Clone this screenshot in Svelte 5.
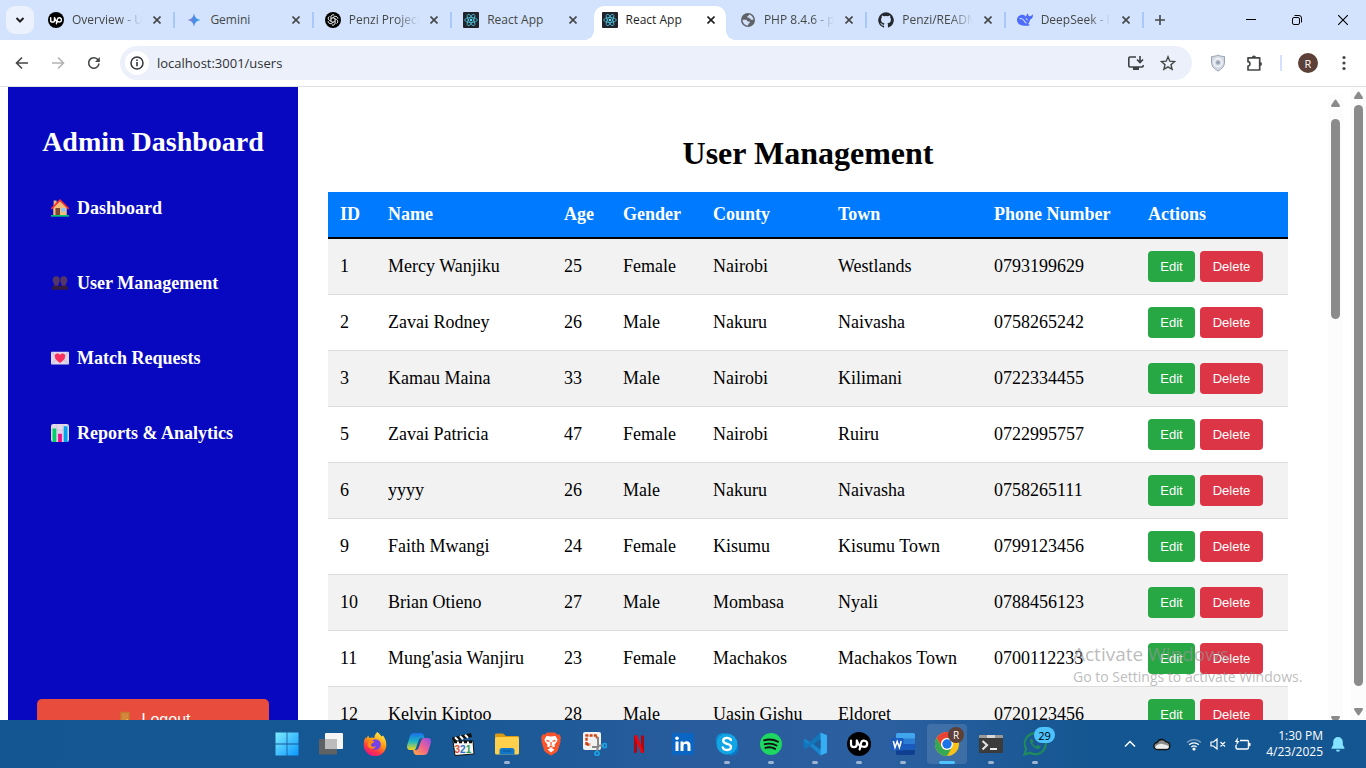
<script>
  const tabs = [
    { title: 'Overview - U', icon: 'upwork', sep: true, fade: true },
    { title: 'Gemini', icon: 'gemini', sep: true },
    { title: 'Penzi Project', icon: 'openai', sep: true, fade: true },
    { title: 'React App', icon: 'react' },
    { title: 'React App', icon: 'react', active: true },
    { title: 'PHP 8.4.6 - p', icon: 'globe', sep: true, fade: true },
    { title: 'Penzi/READM', icon: 'github', sep: true, fade: true },
    { title: 'DeepSeek - I', icon: 'deepseek', sep: true, fade: true }
  ];

  const links = [
    { label: 'Dashboard', icon: 'house' },
    { label: 'User Management', icon: 'people' },
    { label: 'Match Requests', icon: 'letter' },
    { label: 'Reports & Analytics', icon: 'chart' }
  ];

  const columns = [
    ['ID', 48], ['Name', 176], ['Age', 59], ['Gender', 90],
    ['County', 125], ['Town', 156], ['Phone Number', 154], ['Actions', 152]
  ];

  const users = [
    [1, 'Mercy Wanjiku', 25, 'Female', 'Nairobi', 'Westlands', '0793199629'],
    [2, 'Zavai Rodney', 26, 'Male', 'Nakuru', 'Naivasha', '0758265242'],
    [3, 'Kamau Maina', 33, 'Male', 'Nairobi', 'Kilimani', '0722334455'],
    [5, 'Zavai Patricia', 47, 'Female', 'Nairobi', 'Ruiru', '0722995757'],
    [6, 'yyyy', 26, 'Male', 'Nakuru', 'Naivasha', '0758265111'],
    [9, 'Faith Mwangi', 24, 'Female', 'Kisumu', 'Kisumu Town', '0799123456'],
    [10, 'Brian Otieno', 27, 'Male', 'Mombasa', 'Nyali', '0788456123'],
    [11, "Mung'asia Wanjiru", 23, 'Female', 'Machakos', 'Machakos Town', '0700112233'],
    [12, 'Kelvin Kiptoo', 28, 'Male', 'Uasin Gishu', 'Eldoret', '0720123456']
  ];

  const apps = [
    { name: 'Start', icon: 'start' },
    { name: 'Task view', icon: 'taskview' },
    { name: 'Firefox', icon: 'firefox' },
    { name: 'Copilot', icon: 'copilot' },
    { name: 'Media Player Classic', icon: 'clapper' },
    { name: 'File Explorer', icon: 'folder', running: true },
    { name: 'Brave', icon: 'brave' },
    { name: 'Snipping Tool', icon: 'snip' },
    { name: 'Netflix', icon: 'netflix' },
    { name: 'LinkedIn', icon: 'linkedin' },
    { name: 'Skype', icon: 'skype', running: true },
    { name: 'Spotify', icon: 'spotify', running: true },
    { name: 'Visual Studio Code', icon: 'vscode', running: true },
    { name: 'Upwork', icon: 'upwork', running: true },
    { name: 'Word', icon: 'word', running: true },
    { name: 'Chrome', icon: 'chrome', active: true, badge: 'R' },
    { name: 'Terminal', icon: 'terminal', running: true },
    { name: 'WhatsApp', icon: 'whatsapp', running: true, count: '29' }
  ];

  let url = $state('localhost:3001/users');
</script>

{#snippet glyph(name, size)}
  <svg width={size} height={size} viewBox="0 0 24 24" aria-hidden="true">
    {#if name === 'upwork'}
      <circle cx="12" cy="12" r="12" fill="#000" />
      <path d="M4 8.500v3.700a2.900 2.900 0 0 0 5.800 0V8.500M9.800 8.500c1 3.200 2.300 5 4.100 6.200M12.600 17.500l1.500-6.500a3.100 3.100 0 1 1 3.100 3.900c-1.500 0-3-.9-4.200-2.200" fill="none" stroke="#fff" stroke-width="2.200" stroke-linecap="round" />
    {:else if name === 'gemini'}
      <defs><linearGradient id="gem" x1="0" x2="1"><stop offset="0" stop-color="#a178c4" /><stop offset=".5" stop-color="#4c8bea" /><stop offset="1" stop-color="#22b0dc" /></linearGradient></defs>
      <path d="M12 2c.8 6 4 9.200 10 10-6 .8-9.200 4-10 10-.8-6-4-9.200-10-10 6-.8 9.200-4 10-10z" fill="url(#gem)" />
    {:else if name === 'openai'}
      <circle cx="12" cy="12" r="12" fill="#000" />
      <g fill="none" stroke="#e8e8e8" stroke-width="1">
        {#each [0, 60, 120, 180, 240, 300] as a}
          <path d="M12 8.500l3.200 1.900v6.200a3.300 3.300 0 0 1-4.800 2.800M8.900 10.300V7.200a3.300 3.300 0 0 1 5.200-2.500" transform="rotate({a} 12 12)" />
        {/each}
      </g>
    {:else if name === 'react'}
      <rect width="24" height="24" rx="1.500" fill="#20232a" />
      <g fill="none" stroke="#4fb9d3" stroke-width="1.300">
        <ellipse cx="12" cy="12" rx="9.500" ry="3.700" />
        <ellipse cx="12" cy="12" rx="9.500" ry="3.700" transform="rotate(60 12 12)" />
        <ellipse cx="12" cy="12" rx="9.500" ry="3.700" transform="rotate(120 12 12)" />
      </g>
      <circle cx="12" cy="12" r="2" fill="#61dafb" />
    {:else if name === 'globe'}
      <circle cx="12" cy="12" r="10.500" fill="#5f6368" />
      <path d="M14 3.800c3.500 1 6 4 6.200 7.700h-3.700c-.6-1.700-2-1.300-2.500-2.500-.3-.9-1.800-.6-3-.8-.8-1.200.2-1.900 1.200-2.100 1.200-.2.800-1.700 1.800-2.300z" fill="#d3e3fd" />
      <path d="M3.800 11.500h5.400c1.200.3 1.300 1.800 2.300 2.300 1.200.5 2.800.2 3.300 1.200.4 1-.3 1.500-1 1.800-1.500.6-1 1.700-1.800 3.400-4.600 0-8-3.700-8.200-8.700z" fill="#d3e3fd" />
    {:else if name === 'github'}
      <path d="M12 .5a11.700 11.700 0 0 0-3.700 22.800c.6.100.8-.3.800-.6v-2.300c-3.300.7-4-1.400-4-1.400-.5-1.400-1.300-1.700-1.300-1.700-1-.7.100-.7.100-.7 1.200.1 1.800 1.200 1.800 1.200 1 1.800 2.800 1.300 3.500 1 .1-.8.400-1.300.7-1.600-2.600-.3-5.300-1.300-5.300-5.800 0-1.300.4-2.300 1.200-3.100-.1-.3-.5-1.500.1-3.100 0 0 1-.3 3.200 1.200a11 11 0 0 1 5.800 0c2.200-1.500 3.200-1.200 3.200-1.200.6 1.600.2 2.800.1 3.100.8.800 1.200 1.800 1.200 3.100 0 4.500-2.700 5.500-5.300 5.800.4.400.8 1.100.8 2.200v3.300c0 .3.200.7.800.6A11.700 11.700 0 0 0 12 .5z" fill="#24292f" />
    {:else if name === 'deepseek'}
      <path d="M0 12c0-5 4-8.500 9-8 2 .3 3 1.700 4.500 3C14 4.500 15 3.500 16.500 2c0 2 .5 3.500 2 4.500 2 .2 3.500-1 5.500-3 0 5-1.500 7.500-4.500 8-.5 3-1.500 5-3 6.500 1 .5 2.500.8 2.500 1.500-1.500 1.700-5 1.200-7 1C5.500 21 0 17.500 0 12z" fill="#4d6bfe" />
      <path d="M4 10c3-1 5.500 1 7 3.500 1 1.800 2 2.700 3.200 3.200M13 10c1.500 0 2.500 1 2.500 2.500" fill="none" stroke="#d3e3fd" stroke-width="1.600" />
    {:else if name === 'house'}
      <path d="M3.500 2h4v5l-4 3z" fill="#e8b27a" />
      <path d="M3 11l9-9 9 9v11H3z" fill="#f3bd7c" />
      <path d="M1 12.500L12 1.500l11 11" fill="none" stroke="#f8312f" stroke-width="2" stroke-linecap="round" />
      <rect x="6" y="12" width="6" height="10" fill="#7d4533" />
      <rect x="14" y="12" width="5" height="5" fill="#83cbff" />
      <rect y="21.500" width="24" height="2" fill="#00d26a" />
    {:else if name === 'people'}
      <g fill="#533566"><path d="M7 3c4 0 5 3 4.500 6.500C11 12.500 9 15 9 17H5c0-2-2-4.500-2.500-7.500C2 6 3 3 7 3zM17 3c4 0 5 3 4.500 6.500-.5 3-2.500 5.500-2.500 7.500h-4c0-2-2-4.500-2.500-7.500C12 6 13 3 17 3z" /></g>
      <path d="M1 21v-3c0-2 2-2.500 4-2.500h14c2 0 4 .5 4 2.500v3z" fill="#321b41" />
    {:else if name === 'letter'}
      <rect y="3.500" width="24" height="17" rx="1" fill="#e1d8ec" />
      <path d="M1 4.500l8 7.500-8 7.500M23 4.500L15 12l8 7.500" fill="none" stroke="#b4acbc" />
      <path d="M12 18.500C8.500 16 5 13 5 9.500 5 6 9.500 4.500 12 8c2.500-3.500 7-2 7 1.500 0 3.500-3.500 6.500-7 9z" fill="#f92f60" />
    {:else if name === 'chart'}
      <rect width="24" height="24" rx="3" fill="#e1d8ec" />
      <path d="M8 0v24M16 0v24M0 8h24M0 16h24" stroke="#cdc4d6" />
      <rect x="2" y="6" width="5" height="18" fill="#00d26a" />
      <rect x="9.500" y="13" width="5" height="11" fill="#e9108a" />
      <rect x="17" y="3" width="5" height="21" fill="#00a6ed" />
    {:else if name === 'door'}
      <rect x="5.500" y="1" width="13" height="22" fill="#c9772f" />
      <rect x="7.500" y="3" width="9" height="19" fill="#d3883e" />
      <circle cx="15" cy="12" r="1.200" fill="#f9c23c" />
    {:else if name === 'start'}
      <defs><linearGradient id="win" x2="1" y2="1"><stop offset="0" stop-color="#7eeaff" /><stop offset="1" stop-color="#0a98ff" /></linearGradient></defs>
      <path d="M.5.500h11.100v11.100H.5zM12.400.5h11.100v11.100H12.400zM.5 12.400h11.100v11.100H.5zM12.400 12.400h11.100v11.100H12.400z" fill="url(#win)" />
    {:else if name === 'taskview'}
      <rect x="6" y="1" width="18" height="16" rx="1" fill="#f5f5f5" />
      <rect y="7" width="18" height="15.500" rx="1" fill="#5f6163" />
      <rect x="6" y="7" width="12" height="10" fill="#bcbcbc" />
    {:else if name === 'firefox'}
      <defs><linearGradient id="ff" x1=".8" y1="0" x2=".3" y2="1"><stop offset="0" stop-color="#fff44f" /><stop offset=".45" stop-color="#ff980e" /><stop offset=".75" stop-color="#ff3647" /><stop offset="1" stop-color="#e31587" /></linearGradient></defs>
      <path d="M14.500 0c1 1.500 3 2.500 4 4.500l1.500-1c2 2.500 3.300 5.500 3.300 9A11.300 11.300 0 1 1 .8 11.500c0-3 1-4.700 2-6.500v2c.8-1.500 1.700-2.500 2.700-3.500 0 1 .3 1.800.8 2.500 2-1 3.800-.6 5.200 0C11 4 12.500 1.500 14.500 0z" fill="url(#ff)" />
      <circle cx="12.500" cy="12.500" r="5.300" fill="#7542e5" />
      <path d="M5.500 9c2-1.500 4-.5 6 .5-1 1.500-3 1.500-3.500 3 0 2 2.500 3 5 1.800-.5 3.500-8 3.500-8.500-1.300z" fill="#ff8a16" />
    {:else if name === 'copilot'}
      <defs>
        <linearGradient id="cpa" x1="0" y1="0" x2="0" y2="1"><stop offset="0" stop-color="#1b6fe8" /><stop offset=".5" stop-color="#1db7c4" /><stop offset="1" stop-color="#f5d418" /></linearGradient>
        <linearGradient id="cpb" x1="1" y1="0" x2="0" y2="1"><stop offset="0" stop-color="#8c4df0" /><stop offset=".5" stop-color="#f2628f" /><stop offset="1" stop-color="#ffae3b" /></linearGradient>
      </defs>
      <path d="M7 1h7c2 0 2.500 1 3 3l.5 2H15c-2 0-3 1-3.500 2.500L9 16c-.5 1.500-1.500 2-3 2H3c-3 0-3.500-2.500-2.500-6L3 4c.7-2 2-3 4-3z" fill="url(#cpa)" />
      <path d="M17 23h-7c-2 0-3-1-3.500-3L6 18h2c2 0 3-.5 3.700-2.500L14.500 8c.5-1.500 1.500-2 3-2H21c3 0 3.500 2.500 2.500 6L21 20c-.7 2-2 3-4 3z" fill="url(#cpb)" />
    {:else if name === 'clapper'}
      <path d="M1 5.500L20 1l1 4L2 9.500z" fill="#111" /><path d="M4 5.300l3 3.200M9 4l3 3.200M14 2.700l3 3.200" stroke="#fff" stroke-width="2" />
      <path d="M2 9h20l1 13-19 1.500z" fill="#f6f6f6" stroke="#111" stroke-width="1" />
      <path d="M3 10h19" stroke="#111" stroke-width="2.500" stroke-dasharray="3 2" />
      <text x="3.500" y="21" font-family="Liberation Sans" font-weight="bold" font-size="10"><tspan fill="#d9542b">3</tspan><tspan fill="#2d6fc4">2</tspan><tspan fill="#2f9a48">1</tspan></text>
    {:else if name === 'folder'}
      <path d="M0 3c0-1 .7-1.500 1.500-1.500H8L11 4h11.500c1 0 1.500.6 1.500 1.500V10H0z" fill="#dc9a12" />
      <rect y="5" width="24" height="17.500" rx="1.500" fill="#ffd04c" />
      <path d="M4.500 22.500v-4c0-1.500 1-2.500 2.500-2.500h10c1.500 0 2.500 1 2.500 2.500v4z" fill="#1277c8" />
      <path d="M8 19h8" stroke="#0d5ca5" stroke-width="1.500" />
    {:else if name === 'brave'}
      <path d="M8 .5h8l2 2h2.500L22 6l-.7 2 .2 2-2.700 8.500c-1 2-4.500 3.700-6.800 5-2.300-1.300-5.800-3-6.800-5L2.500 10l.2-2L2 6l1.500-3.500H6z" fill="#fb542b" />
      <path d="M12 4.500l4.500-.5 2 3.500-.5 2-2.500 3 .5 2-2.300.8-1.700 2.200-1.700-2.200L8 14.500l.5-2-2.500-3-.5-2 2-3.500zM8.500 17.500L12 16l3.500 1.500L12 20.500z" fill="#fff" />
      <path d="M7.500 8.500l3 .8M16.500 8.500l-3 .8M12 10v3.500M10.500 14l1.500 1 1.500-1" stroke="#fb542b" stroke-width="1.300" fill="none" />
    {:else if name === 'snip'}
      <rect width="18" height="18" rx="2" fill="#f2f2f2" />
      <path d="M3.500 13V3.500H14v3M3.500 12.500H8" fill="none" stroke="#cf3f10" stroke-width="2.400" stroke-dasharray="3 1.200" />
      <path d="M15 5v9L21 13M15 14l-1 6M9 15h7" stroke="#888" stroke-width="2" fill="none" />
      <circle cx="21.500" cy="13.500" r="2" fill="none" stroke="#16a5e8" stroke-width="1.700" /><circle cx="14" cy="21.500" r="2" fill="none" stroke="#16a5e8" stroke-width="1.700" />
    {:else if name === 'netflix'}
      <path d="M7 3.500h3v17l-3 .5zM14 3.500h3V21l-3-.5z" fill="#b1060f" /><path d="M7 3.500h3.200L17 21l-3.200-.5z" fill="#e50914" />
    {:else if name === 'linkedin'}
      <rect x="1" y="1" width="22" height="22" rx="1" fill="#0a66c2" />
      <path d="M4.500 9.500h3v9.500h-3zM9.500 9.500h3V11c1.800-2.800 7-2.500 7 2.500V19h-3v-5c0-3.200-4-2.800-4 0v5h-3z" fill="#fff" /><circle cx="6" cy="6.300" r="1.800" fill="#fff" />
    {:else if name === 'skype'}
      <circle cx="8" cy="8" r="7" fill="#0b8fd8" /><circle cx="16.500" cy="16.500" r="7" fill="#0a78c9" /><circle cx="12" cy="12" r="10.500" fill="#12a5e6" />
      <path d="M16 8c-.8-1.600-2.200-2.200-4-2.200-2.200 0-3.800 1.100-3.800 3 0 4 7.800 2 7.800 6 0 2-1.800 3.200-4 3.200s-3.800-.9-4.300-2.700" fill="none" stroke="#fff" stroke-width="2.300" stroke-linecap="round" />
    {:else if name === 'spotify'}
      <circle cx="12" cy="12" r="11" fill="#1ed760" />
      <path d="M5 8.300c5-1.300 10-.8 14 1.500M5.700 12.200c4.300-1.100 8.300-.7 11.800 1.300M6.300 15.800c3.700-.9 7-.5 9.800 1.100" fill="none" stroke="#121212" stroke-width="1.900" stroke-linecap="round" />
    {:else if name === 'vscode'}
      <path d="M17.500.5L6.800 10.500 2.300 7 .5 8v8l1.800 1 4.500-3.500 10.700 10z" fill="#0f77bd" />
      <path d="M2.300 7l15.200 11v5.500L.5 8z" fill="#1b85ce" /><path d="M17.500 6L2.300 17 .5 16 17.500.5z" fill="#1476b8" />
      <path d="M17.500.5L24 3.300v17.400l-6.500 2.800z" fill="#35aef4" /><path d="M17.500 7v10L11 12z" fill="#225c9b" />
    {:else if name === 'word'}
      <rect x="5" y="1" width="19" height="22" rx="1.500" fill="#41a5ee" /><path d="M5 6.500h19V12H5z" fill="#2b7cd3" /><path d="M5 12h19v5.500H5z" fill="#185abd" /><path d="M5 17.500h19v4c0 1-.5 1.500-1.500 1.500h-16C5.500 23 5 22.500 5 21.500z" fill="#103f91" />
      <rect y="6" width="12.500" height="12.500" rx="1" fill="#185abd" />
      <path d="M2.300 9l1.700 6.500L6.200 9.500l2.200 6L10.200 9" fill="none" stroke="#fff" stroke-width="1.500" />
    {:else if name === 'chrome'}
      <circle cx="12" cy="12" r="12" fill="#fbc116" />
      <path d="M1.600 6A12 12 0 0 1 22.400 6H12a6 6 0 0 0-5.200 9z" fill="#ea4335" />
      <path d="M1.600 6l5.200 9A6 6 0 0 0 12 18l5.200-3L12 24A12 12 0 0 1 1.600 6z" fill="#34a853" />
      <circle cx="12" cy="12" r="6" fill="#fff" /><circle cx="12" cy="12" r="4.700" fill="#1a73e8" />
    {:else if name === 'terminal'}
      <rect y="3" width="24" height="18" rx="1" fill="#3b3b3b" /><path d="M0 6V4c0-.6.4-1 1-1h22c.6 0 1 .4 1 1v2z" fill="#9a9a9a" /><path d="M8 3h8v3H8z" fill="#d8d8d8" />
      <path d="M3.500 9l4.500 4-4.500 4.500" fill="none" stroke="#e0e0e0" stroke-width="2.200" /><path d="M11 17h7" stroke="#fff" stroke-width="1.800" />
    {:else if name === 'whatsapp'}
      <path d="M1.500 22.500l1.600-5.700a10.500 10.500 0 1 1 4 4z" fill="none" stroke="#1f8a5b" stroke-width="2.200" />
      <path d="M8.500 6.500c-1.600.7-2 2.500-1 4.500 1.400 2.800 3.400 4.700 6.200 5.700 2 .7 3.600-.3 4-2.200l-2.900-1.400-1.500 1.500c-1.800-.8-3-2-3.900-3.700l1.200-1.400z" fill="#1f8a5b" />
    {/if}
  </svg>
{/snippet}

{#snippet arrow(down)}
  <svg class="arrow" class:down width="9" height="8" viewBox="0 0 9 8" aria-hidden="true"><path d="M3.500 1.300a1.200 1.200 0 0 1 2 0L9 6.500 8.500 8h-8L0 6.500z" fill="#8b8b8b" /></svg>
{/snippet}

<div class="screen">
  <header class="strip">
    <button class="search" aria-label="Search tabs">
      <svg width="10" height="10" viewBox="0 0 10 10"><path d="M1.500 3L5 6.500 8.500 3" fill="none" stroke="#1f1f1f" stroke-width="2" /></svg>
    </button>
    <div class="tabs">
      {#each tabs as tab}
        <div class="tab" class:active={tab.active} class:sep={tab.sep}>
          {@render glyph(tab.icon, 16)}
          <button class="title" class:fade={tab.fade}>{tab.title}</button>
          <button class="close" aria-label="Close tab">
            <svg width="8" height="8" viewBox="0 0 8 8"><path d="M.5.500l7 7M7.500.5l-7 7" stroke="currentColor" stroke-width="1.600" /></svg>
          </button>
        </div>
      {/each}
    </div>
    <button class="new" aria-label="New tab"><svg width="12" height="12" viewBox="0 0 12 12"><path d="M6 1v10M1 6h10" stroke="#444746" stroke-width="1.600" /></svg></button>
    <div class="window">
      <button aria-label="Minimize"><svg width="10" height="10"><path d="M0 4.500h10" stroke="#000" /></svg></button>
      <button aria-label="Restore"><svg width="10" height="10" viewBox="0 0 10 10"><rect x=".5" y="2.500" width="7" height="7" rx="1.500" fill="none" stroke="#000" /><path d="M2.500.5H7A2.500 2.500 0 0 1 9.500 3v4.500" fill="none" stroke="#000" /></svg></button>
      <button aria-label="Close"><svg width="10" height="10"><path d="M0 0l10 10M10 0L0 10" stroke="#000" stroke-width="1.100" /></svg></button>
    </div>
  </header>

  <div class="toolbar">
    <button class="tool" aria-label="Back"><svg width="16" height="16" viewBox="0 0 16 16"><path d="M14 8H3M8 2.500L2.500 8 8 13.500" fill="none" stroke="#444746" stroke-width="1.600" /></svg></button>
    <button class="tool" aria-label="Forward"><svg width="16" height="16" viewBox="0 0 16 16"><path d="M2 8h11M8 2.500L13.500 8 8 13.500" fill="none" stroke="#b0b2b4" stroke-width="1.600" /></svg></button>
    <button class="tool" aria-label="Reload"><svg width="16" height="16" viewBox="0 0 16 16"><path d="M13 8.500a5.200 5.200 0 1 1-1.500-4.200L13 6" fill="none" stroke="#444746" stroke-width="1.600" /><path d="M13.800 2v5H9z" fill="#444746" /></svg></button>
    <div class="omnibox">
      <button class="info" aria-label="Site information"><svg width="14" height="14" viewBox="0 0 14 14"><circle cx="7" cy="7" r="6" fill="none" stroke="#33363a" stroke-width="1.500" /><path d="M7 6v4.200M7 3.600v1.500" stroke="#33363a" stroke-width="1.600" /></svg></button>
      <input aria-label="Address" bind:value={url} />
      <button class="mark" aria-label="Install app"><svg width="18" height="16" viewBox="0 0 18 16"><path d="M9 2H3a1.200 1.200 0 0 0-1.200 1.200v7.600A1.200 1.200 0 0 0 3 12h12a1.200 1.200 0 0 0 1.200-1.200V10M13 1v6M10 4.500l3 3 3-3" fill="none" stroke="#3c4043" stroke-width="1.600" /><path d="M6 12h6v3H6z" fill="#3c4043" /></svg></button>
      <button class="mark" aria-label="Bookmark"><svg width="16" height="16" viewBox="0 0 16 16"><path d="M8 1.800l1.800 4.400 4.800.4-3.600 3.100 1.100 4.600L8 11.800l-4.100 2.500L5 9.700 1.400 6.600l4.800-.4z" fill="none" stroke="#444746" stroke-width="1.400" /></svg></button>
    </div>
    <button class="tool" aria-label="Shield"><svg width="16" height="18" viewBox="0 0 16 18"><path d="M8 1c2 1 4 1.500 6.500 1.500V8c0 4-2.500 7-6.500 9-4-2-6.500-5-6.500-9V2.500C4 2.500 6 2 8 1z" fill="#d3d9e3" stroke="#9aa3b3" /><circle cx="8" cy="8.500" r="4" fill="none" stroke="#f4f6fa" stroke-width="1.300" /><circle cx="8" cy="8.500" r="2" fill="#98a3b5" /></svg></button>
    <button class="tool" aria-label="Extensions"><svg width="18" height="18" viewBox="0 0 18 18"><path d="M3 3.800h11.700v12.200H3v-3.800c2.500 0 2.500-4.500 0-4.500z" fill="none" stroke="#444746" stroke-width="1.700" stroke-linejoin="round" /><path d="M6.800 3.500a2.100 2.100 0 0 1 4.200 0zM15 8a2 2 0 0 1 0 4z" fill="#444746" /></svg></button>
    <span class="rule"></span>
    <button class="avatar" aria-label="Profile">R</button>
    <button class="tool" aria-label="Menu"><svg width="4" height="16" viewBox="0 0 4 16"><g fill="#444746"><circle cx="2" cy="2.500" r="1.600" /><circle cx="2" cy="8" r="1.600" /><circle cx="2" cy="13.500" r="1.600" /></g></svg></button>
  </div>

  <div class="page">
    <aside>
      <h2>Admin Dashboard</h2>
      <nav>
        {#each links as link}
          <a href="#{link.icon}">{@render glyph(link.icon, 18)}{link.label}</a>
        {/each}
      </nav>
      <button class="logout">{@render glyph('door', 18)}Logout</button>
    </aside>
    <main>
      <h1>User Management</h1>
      <table>
        <colgroup>{#each columns as [, width]}<col style="width: {width}px" />{/each}</colgroup>
        <thead><tr>{#each columns as [label]}<th>{label}</th>{/each}</tr></thead>
        <tbody>
          {#each users as user}
            <tr>
              {#each user as value}<td>{value}</td>{/each}
              <td><div class="actions"><button class="edit">Edit</button><button class="delete">Delete</button></div></td>
            </tr>
          {/each}
        </tbody>
      </table>
    </main>
    <div class="bar inner">{@render arrow(false)}<span class="thumb"></span>{@render arrow(true)}</div>
    <div class="bar outer">{@render arrow(false)}<span class="thumb"></span>{@render arrow(true)}</div>
    <div class="watermark"><p>Activate Windows</p><p>Go to Settings to activate Windows.</p></div>
  </div>

  <footer>
    <div class="apps">
      {#each apps as app}
        <button class="app" class:current={app.active} class:running={app.running} aria-label={app.name}>
          {@render glyph(app.icon, 24)}
          {#if app.badge}<span class="badge">{app.badge}</span>{/if}
          {#if app.count}<span class="count">{app.count}</span>{/if}
        </button>
      {/each}
    </div>
    <div class="tray">
      <svg width="12" height="8" viewBox="0 0 12 8"><path d="M1 6.500l5-5 5 5" fill="none" stroke="#fff" stroke-width="1.500" /></svg>
      <svg class="cloud" width="18" height="14" viewBox="0 0 18 14"><path d="M4.500 12.500a3.500 3.500 0 0 1-.3-7A5 5 0 0 1 13 4.800a3.900 3.900 0 0 1 .8 7.700z" fill="#8b8b8b" stroke="#111" stroke-width="1.300" /><path d="M2 10c3-3 6-4 9-2.500 2.500.2 4 .8 5 2.500-.4 1.200-1.200 1.800-2.500 1.800h-9C3.200 11.800 2.300 11.200 2 10z" fill="#ececec" /></svg>
      <svg class="wifi" width="16" height="14" viewBox="0 0 16 14"><g fill="none" stroke="#fff" stroke-width="1.300"><path d="M1 5.500a10 10 0 0 1 14 0" opacity=".45" /><path d="M3.200 7.800a7 7 0 0 1 9.600 0M5.400 10a4 4 0 0 1 5.200 0" /></g><circle cx="8" cy="12" r="1.600" fill="#fff" /></svg>
      <svg width="16" height="14" viewBox="0 0 16 14"><path d="M1 5v4h2.500L7 12V2L3.500 5zM10.500 5l4.500 4.500M15 5l-4.500 4.500" fill="none" stroke="#fff" stroke-width="1.200" /></svg>
      <svg width="17" height="14" viewBox="0 0 17 14"><path d="M6 3.500h7.500a1 1 0 0 1 1 1v6a1.500 1.500 0 0 1-1.500 1.500H3.500A1.500 1.500 0 0 1 2 10.500V8" fill="none" stroke="#fff" stroke-width="1.400" /><path d="M15 6h1.500v3H15zM4 0L.8 5h2l-.6 3.500L5.500 4h-2z" fill="#fff" /></svg>
      <div class="clock"><span>1:30 PM</span><span>4/23/2025</span></div>
      <svg width="14" height="16" viewBox="0 0 14 16"><path d="M7 1a4.800 4.800 0 0 1 4.800 4.800v3L13.500 12v.8H.5V12l1.700-3.200v-3A4.800 4.800 0 0 1 7 1zM5 13.800h4a2 2 0 0 1-4 0z" fill="#84e4ff" /></svg>
    </div>
  </footer>
</div>

<style>
  :global(body) { margin: 0; overflow: hidden; }
  .screen { display: flex; flex-direction: column; height: 100vh; overflow: hidden; background: #fff; font-family: 'Open Sans', sans-serif; }
  .screen :global(svg) { display: block; flex: none; }
  button { display: flex; align-items: center; justify-content: center; padding: 0; border: 0; background: none; color: inherit; font: inherit; }

  .strip { display: flex; flex: none; align-items: center; height: 40px; background: #d3e3fd; font-size: 12px; color: #444746; }
  .search { flex: none; width: 28px; height: 28px; margin: 0 3px 0 6px; border-radius: 9px; background: #ebf2fe; }
  .tabs { display: flex; flex: 0 1 1107px; align-self: stretch; min-width: 0; }
  .tab { position: relative; display: flex; flex: 1 1 0; align-items: center; gap: 8px; min-width: 0; padding: 0 14px 0 11px; }
  .tab.sep::after { content: ''; position: absolute; right: 0; top: 12px; width: 2px; height: 16px; background: #a8c7fa; }
  .title { flex: 1; justify-content: flex-start; min-width: 0; overflow: hidden; line-height: 18px; white-space: nowrap; }
  .fade { -webkit-mask: linear-gradient(to right, #000 65%, transparent 96%); mask: linear-gradient(to right, #000 65%, transparent 96%); }
  .close { flex: none; width: 8px; height: 8px; }
  .tab.active { color: #1f1f1f; }
  .tab.active::before { content: ''; position: absolute; inset: 6px 3px 0; border-radius: 10px 10px 0 0; background: #fff; }
  .tab.active::after { content: ''; position: absolute; bottom: 0; left: -7px; right: -7px; height: 10px; background: radial-gradient(circle at 0 0, transparent 10px, #fff 10px) left / 10px 10px no-repeat, radial-gradient(circle at 10px 0, transparent 10px, #fff 10px) right / 10px 10px no-repeat; }
  .tab.active > :global(*) { position: relative; z-index: 1; }
  .new { flex: none; width: 32px; height: 28px; }
  .window { display: flex; align-self: stretch; margin-left: auto; }
  .window button { width: 46px; }

  .toolbar { display: flex; flex: none; align-items: center; box-sizing: border-box; height: 47px; padding: 0 4px; border-bottom: 1px solid #dfe1e5; background: #fff; }
  .tool { flex: none; width: 36px; height: 34px; }
  .omnibox { display: flex; flex: 1; align-items: center; height: 34px; min-width: 0; margin: 0 8px; padding: 0 8px 0 5px; border-radius: 17px; background: #ebf0fa; }
  .info { flex: none; width: 24px; height: 24px; border-radius: 50%; background: #fff; }
  .omnibox input { flex: 1; min-width: 0; padding: 0 8px; border: 0; outline: 0; background: none; color: #303134; font: 13px/20px 'Open Sans', sans-serif; }
  .mark { flex: none; width: 32px; height: 32px; }
  .rule { flex: none; width: 2px; height: 16px; margin: 0 16px 0 8px; background: #d3e3fd; }
  .avatar { flex: none; width: 20px; height: 20px; margin-right: 8px; border-radius: 50%; background: #5d4037; color: #fff; font-size: 11px; }

  .page { position: relative; display: flex; flex: 1; min-height: 0; padding-left: 8px; overflow: hidden; }
  aside { display: flex; flex: none; flex-direction: column; box-sizing: border-box; width: 290px; height: calc(100% + 40px); padding: 39px 29px 20px; background: #0908c1; color: #fff; font-family: 'Liberation Serif', serif; }
  h2 { margin: 0 0 40px; font-size: 28px; line-height: 32px; text-align: center; white-space: nowrap; }
  nav { display: flex; flex-direction: column; gap: 55px; padding-left: 14px; }
  a { display: flex; align-items: center; gap: 8px; color: #fff; font-size: 18px; font-weight: bold; line-height: 20px; text-decoration: none; }
  .logout { flex: none; gap: 8px; height: 41px; margin-top: auto; border-radius: 5px; background: #e74c3c; font: 16px 'Liberation Sans', sans-serif; }

  main { flex: 1; min-width: 0; padding: 48px 40px 0 30px; font-family: 'Liberation Serif', serif; }
  h1 { margin: 0 0 20px; font-size: 32px; line-height: 37px; text-align: center; }
  table { width: 100%; table-layout: fixed; border-collapse: separate; border-spacing: 0; font-size: 18px; line-height: 21px; color: #000; }
  th, td { padding: 12px 0 12px 12px; text-align: left; white-space: nowrap; }
  th { border-bottom: 2px solid #000; background: #007bff; color: #fff; }
  td { border-bottom: 1px solid #ddd; }
  tbody tr:nth-child(odd) { background: #f2f2f2; }
  .actions { display: flex; gap: 5px; }
  .actions button { height: 31px; border-radius: 4px; color: #fff; font: 13px 'Liberation Sans', sans-serif; }
  .actions .edit { width: 47px; background: #28a745; }
  .actions .delete { width: 63px; background: #dc3545; }

  .bar { display: flex; flex: none; flex-direction: column; align-items: center; justify-content: space-between; box-sizing: border-box; width: 15px; height: 100%; padding: 4px 0; background: #fcfcfc; }
  .inner { margin: 8px 8px 0 0; }
  .thumb { width: 9px; border-radius: 5px; background: #8b8b8b; }
  .inner .thumb { height: 200px; margin: 12px 0 auto; }
  .outer .thumb { flex: 1; margin: 6px 0 22px; }
  .down { transform: rotate(180deg); }
  .watermark { position: absolute; left: 1073px; bottom: 33px; color: rgba(150, 150, 150, 0.65); white-space: nowrap; }
  .watermark p { margin: 0; font-size: 14px; line-height: 20px; }
  .watermark p:first-child { font-size: 19px; line-height: 25px; }

  footer { display: grid; flex: none; grid-template-columns: 265fr auto 309fr; align-items: center; height: 48px; background: linear-gradient(to right, #145691 0, #155894 30%, #285c9c 50%, #2b5f9f 65%, #145691 80%); color: #fff; }
  .apps { display: flex; grid-column: 2; }
  .app { position: relative; width: 44px; height: 48px; }
  .app.current::before { content: ''; position: absolute; inset: 4px 2px; border-radius: 4px; background: rgba(255, 255, 255, 0.12); }
  .app > :global(svg) { position: relative; }
  .app.running::after, .app.current::after { content: ''; position: absolute; left: 19px; bottom: 4px; width: 6px; height: 3px; border-radius: 2px; background: #9db4d0; }
  .app.current::after { left: 14px; width: 16px; background: #4cc2ff; }
  .badge, .count { position: absolute; display: flex; align-items: center; justify-content: center; height: 16px; }
  .badge { top: 7px; right: 5px; width: 16px; border-radius: 50%; background: #5d4037; font-size: 10px; }
  .count { top: 7px; right: 2px; width: 21px; border-radius: 8px; background: #4cc2ff; color: #000; font-size: 11px; }
  .tray { display: flex; grid-column: 3; align-items: center; justify-content: flex-end; padding-right: 21px; }
  .cloud { margin: 0 23px 0 17px; }
  .tray .cloud + .wifi { margin: 0 8px 0 -8px; }
  .tray .wifi + :global(svg) { margin-right: 8px; }
  .clock { display: flex; flex-direction: column; align-items: flex-end; margin: 0 8px 0 15px; font-size: 12px; line-height: 16px; }
</style>
